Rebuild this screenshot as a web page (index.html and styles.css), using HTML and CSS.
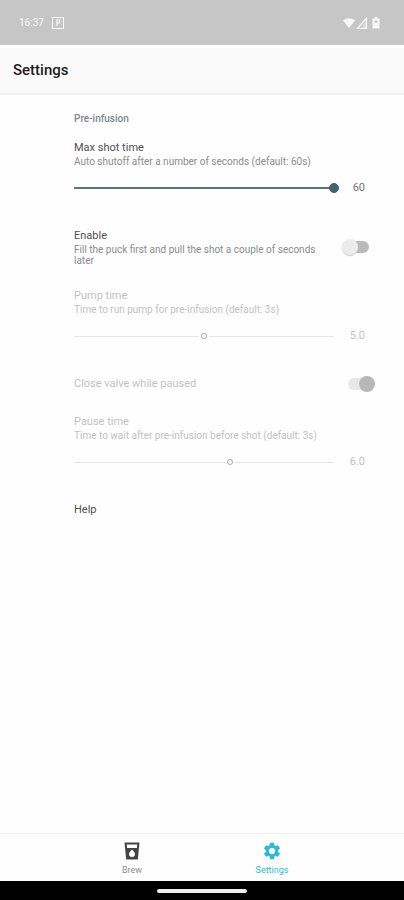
FILE: index.html
```html
<!DOCTYPE html>
<html lang="en">
<head>
<meta charset="utf-8">
<meta name="viewport" content="width=device-width, initial-scale=1">
<title>Settings</title>
<link rel="stylesheet" href="styles.css">
</head>
<body>
<div class="status">
  <span class="clock">16:37</span>
  <svg class="app-icon" width="14" height="14" viewBox="0 0 14 14" fill="none" stroke="currentColor" aria-hidden="true"><rect x="1.5" y="1.5" width="11" height="11"/><path d="M6 10V4h2.500v3H6" stroke-width="1.2"/></svg>
  <svg class="signals" width="40" height="14" viewBox="0 0 40 14" fill="currentColor" aria-hidden="true"><path d="M1 4.500Q7 0 13 4.500L7 12z"/><path d="M24.400 2.500V12.300H15.500z" fill="none" stroke="currentColor" stroke-width="1.300"/><path d="M20.500 9l3.500-4v7h-3.500z" opacity=".4"/><path d="M30.500 2.500h2V1h3v1.500h2V12.500h-7z"/><path d="M32.500 4.500h3v2h-3z" fill="#c6c6c6"/></svg>
</div>
<header class="appbar"><h1>Settings</h1></header>
<main class="settings">
  <h2>Pre-infusion</h2>
  <section class="item">
    <label class="name" for="shot">Max shot time</label>
    <p class="hint">Auto shutoff after a number of seconds (default: 60s)</p>
    <div class="slider"><input class="active" type="range" id="shot" min="0" max="60" value="60"><output for="shot">60</output></div>
  </section>
  <section class="item toggle">
    <div class="text">
      <label class="name" for="enable">Enable</label>
      <p class="hint">Fill the puck first and pull the shot a couple of seconds later</p>
    </div>
    <input type="checkbox" role="switch" id="enable">
  </section>
  <section class="item disabled">
    <label class="name" for="pump">Pump time</label>
    <p class="hint">Time to run pump for pre-infusion (default: 3s)</p>
    <div class="slider"><input type="range" id="pump" min="0" max="10" step="0.1" value="5" disabled><output for="pump">5.0</output></div>
  </section>
  <section class="item toggle disabled">
    <div class="text"><label class="name" for="valve">Close valve while paused</label></div>
    <input type="checkbox" role="switch" id="valve" checked disabled>
  </section>
  <section class="item disabled">
    <label class="name" for="pause">Pause time</label>
    <p class="hint">Time to wait after pre-infusion before shot (default: 3s)</p>
    <div class="slider"><input type="range" id="pause" min="0" max="10" step="0.1" value="6" disabled><output for="pause">6.0</output></div>
  </section>
  <a class="name" href="#help">Help</a>
</main>
<nav class="tabs">
  <a href="#brew">
    <svg width="18" height="18" viewBox="0 0 18 18" aria-hidden="true"><path fill="#444" fill-rule="evenodd" d="M1.500 0.500h15l-1.700 17H3.200zM3.800 2.500l.3 3.500h9.800l.3-3.500zM9 7.500c-1.200 1.500-3 2.800-3 4.600a3 3 0 0 0 6 0c0-1.800-1.800-3.100-3-4.600z"/></svg>
    <span>Brew</span>
  </a>
  <a class="current" href="#settings" aria-current="page">
    <svg width="18" height="18" viewBox="1 1 22 22" aria-hidden="true"><path fill="currentColor" d="M19.430 12.980c.04-.32.070-.64.070-.98s-.03-.66-.07-.98l2.110-1.650c.19-.15.240-.42.120-.64l-2-3.460c-.12-.22-.39-.3-.61-.22l-2.490 1c-.52-.4-1.080-.73-1.690-.98l-.38-2.650C14.460 2.180 14.250 2 14 2h-4c-.25 0-.46.180-.49.420l-.38 2.650c-.61.250-1.170.590-1.690.980l-2.490-1c-.23-.09-.49 0-.61.220l-2 3.460c-.13.220-.07.490.120.640l2.110 1.650c-.04.320-.07.650-.07.980s.03.660.070.980l-2.110 1.650c-.19.150-.24.420-.12.640l2 3.460c.12.220.39.300.61.220l2.490-1c.52.400 1.080.730 1.690.980l.38 2.650c.03.240.24.420.49.420h4c.25 0 .46-.18.490-.42l.38-2.650c.61-.25 1.170-.59 1.690-.98l2.490 1c.23.090.49 0 .61-.22l2-3.460c.12-.22.070-.49-.12-.64zM12 15.800a3.800 3.800 0 1 1 0-7.600 3.800 3.800 0 0 1 0 7.600z"/></svg>
    <span>Settings</span>
  </a>
</nav>
<div class="gesture"><div class="pill"></div></div>
</body>
</html>
```
FILE: styles.css
```css
* {
  box-sizing: border-box;
}

body {
  margin: 0;
  min-height: 100vh;
  display: flex;
  flex-direction: column;
  background: #fefefe;
  color: #555;
  font-family: Roboto, "Liberation Sans", sans-serif;
}

h1, h2, p {
  margin: 0;
}

a {
  color: inherit;
  text-decoration: none;
}

.status {
  height: 45px;
  padding: 0 22px 0 19px;
  display: flex;
  align-items: center;
  gap: 7px;
  background: #c6c6c6;
  color: #f8f8f8;
}

.clock {
  font-size: 10px;
}

.signals {
  margin-left: auto;
}

.appbar {
  height: 49px;
  padding: 0 13px;
  display: flex;
  align-items: center;
  background: #fafafa;
  border-top: 2px solid #fff;
  border-bottom: 1px solid #eee;
  box-shadow: 0 1px 1px #f4f4f4;
}

h1 {
  font-size: 15px;
  font-weight: 500;
  line-height: 16px;
  color: #1c1c1c;
}

.settings {
  flex: 1;
  padding: 17px 39px 24px 74px;
}

h2 {
  margin-bottom: 13px;
  font-size: 10px;
  font-weight: 500;
  line-height: 16px;
  color: #7b878d;
}

.item {
  padding-bottom: 31px;
}

.name {
  display: block;
  font-size: 11px;
  line-height: 16px;
  color: #505050;
}

.hint {
  font-size: 10px;
  line-height: 11px;
  color: #8c8c8c;
}

.disabled .name,
.disabled .hint,
.disabled output {
  color: #c2c2c2;
}

.toggle {
  display: flex;
  align-items: center;
  gap: 16px;
  margin-right: -10px;
  padding-bottom: 22px;
}

.text {
  flex: 1;
}

.slider {
  display: flex;
  align-items: center;
  height: 18px;
  margin-top: 12px;
}

output {
  flex: none;
  width: 31px;
  text-align: right;
  font-size: 11px;
  line-height: 16px;
  color: #707070;
}

input {
  appearance: none;
  margin: 0;
}

input[type="range"] {
  flex: 1;
  min-width: 0;
  height: 18px;
  margin: 0 -3px;
  background: linear-gradient(#e6e6e6, #e6e6e6) center / calc(100% - 6px) 1px no-repeat;
}

input[type="range"]::-webkit-slider-thumb {
  appearance: none;
  width: 6px;
  height: 6px;
  border: 1px solid #a8a8a8;
  border-radius: 50%;
  background: #fefefe;
  box-shadow: 0 0 0 2px #fefefe;
}

input[type="range"].active {
  margin: 0 -5px;
  background: linear-gradient(#5d7480, #5d7480) center / calc(100% - 10px) 2px no-repeat;
}

input[type="range"].active::-webkit-slider-thumb {
  width: 10px;
  height: 10px;
  border-color: #405c69;
  background: #48636f;
  box-shadow: none;
}

input[type="checkbox"] {
  position: relative;
  flex: none;
  width: 33px;
  height: 16px;
}

input[type="checkbox"]::before,
input[type="checkbox"]::after {
  content: "";
  position: absolute;
  border-radius: 8px;
}

input[type="checkbox"]::before {
  inset: 2px 6px;
  background: #bababa;
}

input[type="checkbox"]::after {
  top: 0;
  left: 0;
  width: 16px;
  height: 16px;
  background: #ececec;
  box-shadow: 0 1px 1px #ccc;
}

input[type="checkbox"]:checked::before {
  background: #e8e8e8;
}

input[type="checkbox"]:checked::after {
  left: auto;
  right: 0;
  background: #b7b7b7;
  box-shadow: none;
}

.tabs {
  height: 48px;
  display: flex;
  justify-content: center;
  border-top: 1px solid #eee;
}

.tabs a {
  width: 140px;
  padding-top: 8px;
  display: flex;
  flex-direction: column;
  align-items: center;
  gap: 4px;
  font-size: 9px;
  line-height: 12px;
  color: #8c8c8c;
}

.tabs .current {
  color: #2bbcd4;
}

.gesture {
  height: 19px;
  display: flex;
  align-items: center;
  justify-content: center;
  background: #000;
}

.pill {
  width: 90px;
  height: 4px;
  border-radius: 2px;
  background: #eee;
}
```
